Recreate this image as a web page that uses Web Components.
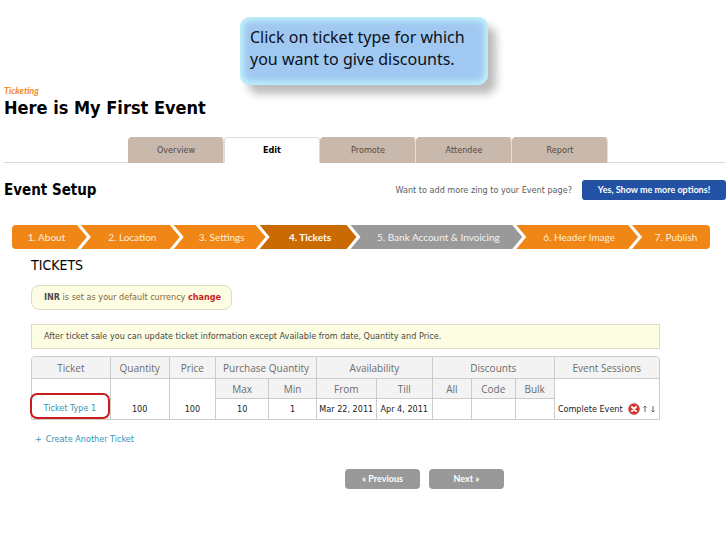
<!DOCTYPE html>
<html lang="en">
<head>
<meta charset="utf-8">
<meta name="viewport" content="width=device-width, initial-scale=1">
<title>Event Setup</title>
<style>
    body {
        margin: 0;
        background: #fff;
        color: #000;
        font-family: "DejaVu Sans Condensed", "Noto Sans", sans-serif;
        font-size: 9px;
        line-height: 14px;
    }
</style>
</head>
<body>
<event-page></event-page>

<script>
class CalloutNote extends HTMLElement {
    constructor() {
        super();
        this.attachShadow({ mode: 'open' });
        this.shadowRoot.innerHTML = `
            <style>
                :host {
                    display: block;
                    box-sizing: border-box;
                    max-width: 248px;
                    min-height: 68px;
                    margin: 0 auto;
                    padding: 9px 10px;
                    border-radius: 10px;
                    background: #a1c8f1;
                    box-shadow: inset 0 0 7px 3px #c4f8fb, 8px 9px 9px #bcbcbc;
                    color: #0a1220;
                    font: 16px/22px "Noto Sans", sans-serif;
                }
            </style>
            <slot></slot>
        `;
    }
}
customElements.define('callout-note', CalloutNote);

class TabItem extends HTMLElement {
    constructor() {
        super();
        this.attachShadow({ mode: 'open' });
        this.shadowRoot.innerHTML = `
            <style>
                :host {
                    display: block;
                    flex: 1;
                    margin-bottom: -1px;
                }
                a {
                    display: block;
                    box-sizing: border-box;
                    height: 26px;
                    border: 1px solid #c9b8ac;
                    border-right-color: #e6ddd6;
                    border-bottom: none;
                    border-radius: 4px 4px 0 0;
                    background: #c9b8ac;
                    color: #574b43;
                    line-height: 25px;
                    text-align: center;
                    text-decoration: none;
                }
                :host([active]) a {
                    border-color: #dcdcdc;
                    background: #fff;
                    color: #000;
                    font-weight: bold;
                }
            </style>
            <a href="#"><slot></slot></a>
        `;
    }
}
customElements.define('tab-item', TabItem);

class TabBar extends HTMLElement {
    constructor() {
        super();
        this.attachShadow({ mode: 'open' });
        this.shadowRoot.innerHTML = `
            <style>
                :host { display: block; }
                nav {
                    display: flex;
                    padding: 0 117px 0 124px;
                    border-bottom: 1px solid #d8d8d8;
                }
            </style>
            <nav><slot></slot></nav>
        `;
    }
}
customElements.define('tab-bar', TabBar);

class StepItem extends HTMLElement {
    constructor() {
        super();
        this.attachShadow({ mode: 'open' });
        this.shadowRoot.innerHTML = `
            <style>
                :host {
                    display: block;
                    flex: 1 1 0;
                    margin-left: -6px;
                }
                a {
                    display: block;
                    padding: 0 6px 0 10px;
                    background: #f08616;
                    clip-path: polygon(0 0, calc(100% - 10px) 0, 100% 50%, calc(100% - 10px) 100%, 0 100%, 10px 50%);
                    color: #fdeedd;
                    line-height: 24px;
                    text-align: center;
                    text-decoration: none;
                    white-space: nowrap;
                }
                :host(:first-child) { margin-left: 0; }
                :host(:first-child) a {
                    padding-left: 0;
                    border-radius: 4px 0 0 4px;
                    clip-path: polygon(0 0, calc(100% - 10px) 0, 100% 50%, calc(100% - 10px) 100%, 0 100%);
                }
                :host(:last-child) a {
                    padding-right: 0;
                    border-radius: 0 4px 4px 0;
                    clip-path: polygon(0 0, 100% 0, 100% 100%, 0 100%, 10px 50%);
                }
                :host([state="current"]) a {
                    background: #c96a02;
                    color: #fff;
                    font-weight: bold;
                }
                :host([state="pending"]) a {
                    background: #999;
                    color: #f4f4f4;
                }
            </style>
            <a href="#"><slot></slot></a>
        `;
    }

    connectedCallback() {
        this.style.flexGrow = this.getAttribute('size');
    }
}
customElements.define('step-item', StepItem);

class StepBar extends HTMLElement {
    constructor() {
        super();
        this.attachShadow({ mode: 'open' });
        this.shadowRoot.innerHTML = `
            <style>
                :host {
                    display: flex;
                    font-family: Lato, sans-serif;
                    font-size: 10px;
                }
            </style>
            <slot></slot>
        `;
    }
}
customElements.define('step-bar', StepBar);

class NoticeBox extends HTMLElement {
    constructor() {
        super();
        this.attachShadow({ mode: 'open' });
        this.shadowRoot.innerHTML = `
            <style>
                :host {
                    display: block;
                    padding: 0 12px;
                    border: 1px solid #dcdcc0;
                    background: #fdfde3;
                    color: #4a4a42;
                    line-height: 23px;
                }
                :host([pill]) {
                    width: fit-content;
                    border-radius: 8px;
                    color: #86683a;
                    padding-right: 10px;
                }
            </style>
            <slot></slot>
        `;
    }
}
customElements.define('notice-box', NoticeBox);

class TicketTable extends HTMLElement {
    constructor() {
        super();
        this.attachShadow({ mode: 'open' });
        this.shadowRoot.innerHTML = `
            <style>
                :host { display: block; }
                table {
                    width: 100%;
                    table-layout: fixed;
                    border: 1px solid #ccc;
                    border-radius: 4px 4px 0 0;
                    border-spacing: 0;
                }
                th, td {
                    height: 20px;
                    padding: 0;
                    border-left: 1px solid #ccc;
                    text-align: center;
                    white-space: nowrap;
                    line-height: 14px;
                    box-sizing: border-box;
                }
                th {
                    border-bottom: 1px solid #ccc;
                    background: #f3f3f3;
                    color: #6c6c6c;
                    font: 10px/14px "Open Sans", sans-serif;
                }
                thead tr:first-child th { height: 22px; }
                thead tr:first-child th:first-child { border-top-left-radius: 3px; }
                thead tr:first-child th:last-child { border-top-right-radius: 3px; }
                th:first-child, td:first-child { border-left: none; }
                td { color: #222; }
                .type {
                    display: block;
                    margin: -6px 0 0 -2px;
                    padding: 6px 0 2px;
                    border: 2px solid #cb1b1f;
                    border-radius: 7px;
                    color: #3596b5;
                    text-decoration: none;
                }
                .session {
                    display: flex;
                    align-items: center;
                    justify-content: center;
                    gap: 5px;
                }
                .tools {
                    display: flex;
                    align-items: center;
                    gap: 2px;
                }
                button {
                    display: block;
                    padding: 0;
                    border: none;
                    background: none;
                }
                svg { display: block; }
            </style>
            <table>
                <colgroup>
                    <col style="width: 12.4%">
                    <col style="width: 9.4%">
                    <col style="width: 7.4%">
                    <col style="width: 8.5%">
                    <col style="width: 7.6%">
                    <col style="width: 9.5%">
                    <col style="width: 9%">
                    <col style="width: 6.2%">
                    <col style="width: 7%">
                    <col style="width: 6.2%">
                    <col>
                </colgroup>
                <thead>
                    <tr>
                        <th>Ticket</th>
                        <th>Quantity</th>
                        <th>Price</th>
                        <th colspan="2">Purchase Quantity</th>
                        <th colspan="2">Availability</th>
                        <th colspan="3">Discounts</th>
                        <th>Event Sessions</th>
                    </tr>
                    <tr>
                        <td></td>
                        <td></td>
                        <td></td>
                        <th>Max</th>
                        <th>Min</th>
                        <th>From</th>
                        <th>Till</th>
                        <th>All</th>
                        <th>Code</th>
                        <th>Bulk</th>
                        <td></td>
                    </tr>
                </thead>
                <tbody></tbody>
            </table>
        `;
    }

    connectedCallback() {
        this.tickets = [
            { type: 'Ticket Type 1', cells: ['100', '100', '10', '1', 'Mar 22, 2011', 'Apr 4, 2011', '', '', ''], session: 'Complete Event' }
        ];
        this.render();
    }

    render() {
        this.shadowRoot.querySelector('tbody').innerHTML = this.tickets.map((ticket) => `
            <tr>
                <td><a class="type" href="#">${ticket.type}</a></td>
                ${ticket.cells.map((cell) => `<td>${cell}</td>`).join('')}
                <td>
                    <div class="session">
                        <span>${ticket.session}</span>
                        <div class="tools">
                            <button type="button" aria-label="Delete">
                                <svg width="12" height="12" viewBox="0 0 12 12">
                                    <circle cx="6" cy="6" r="5.5" fill="#d8302c" stroke="#b9625c" stroke-width=".6"/>
                                    <path d="M4 4l4 4M8 4l-4 4" stroke="#fff" stroke-width="2" stroke-linecap="round"/>
                                </svg>
                            </button>
                            <button type="button" aria-label="Move up">
                                <svg width="6" height="8" viewBox="0 0 6 8">
                                    <path d="M3 7V1M1.500 2.500L3 1l1.500 1.500" fill="none" stroke="#555" stroke-width=".9"/>
                                </svg>
                            </button>
                            <button type="button" aria-label="Move down">
                                <svg width="6" height="8" viewBox="0 0 6 8">
                                    <path d="M3 1V7M1.500 5.500L3 7l1.500-1.500" fill="none" stroke="#555" stroke-width=".9"/>
                                </svg>
                            </button>
                        </div>
                    </div>
                </td>
            </tr>
        `).join('');
    }
}
customElements.define('ticket-table', TicketTable);

class ActionButton extends HTMLElement {
    constructor() {
        super();
        this.attachShadow({ mode: 'open' });
        this.shadowRoot.innerHTML = `
            <style>
                :host { display: block; }
                button {
                    display: block;
                    min-width: 75px;
                    height: 20px;
                    padding: 0 14px;
                    border: none;
                    border-radius: 4px;
                    background: #999;
                    color: #fff;
                    font: bold 9px/20px Lato, sans-serif;
                }
                :host([primary]) button {
                    min-width: 144px;
                    border-radius: 3px;
                    background: #2352a5;
                }
            </style>
            <button type="button"><slot></slot></button>
        `;
    }
}
customElements.define('action-button', ActionButton);

class EventPage extends HTMLElement {
    constructor() {
        super();
        this.attachShadow({ mode: 'open' });
        this.shadowRoot.innerHTML = `
            <style>
                :host {
                    display: block;
                    padding-top: 17px;
                }
                h1, h2, h3, p { margin: 0; }
                header {
                    display: flex;
                    flex-direction: column;
                    padding: 0 3px 0 4px;
                }
                .brand {
                    color: #ef8a2a;
                    font: italic bold 9px/12px Lato, sans-serif;
                }
                h1 {
                    margin-bottom: 18px;
                    font-size: 18px;
                    line-height: 22px;
                }
                .setup {
                    display: flex;
                    align-items: center;
                    gap: 10px;
                    padding: 16px 2px 0 4px;
                }
                h2 {
                    flex: 1;
                    font-size: 15px;
                    line-height: 22px;
                }
                .setup p { color: #5c5c5c; }
                step-bar { margin: 24px 18px 0 12px; }
                main {
                    padding: 8px 68px 0 31px;
                }
                h3 {
                    margin-bottom: 11px;
                    font-size: 14px;
                    font-weight: normal;
                    line-height: 17px;
                }
                .code { color: #4c4c4c; }
                .change {
                    color: #cc1f1f;
                    font-weight: bold;
                    text-decoration: none;
                }
                .sale { margin: 14px 0 7px; }
                .create {
                    display: flex;
                    gap: 4px;
                    width: fit-content;
                    margin: 12px 0 0 4px;
                    color: #3596b5;
                    text-decoration: none;
                }
                footer {
                    display: flex;
                    gap: 9px;
                    padding: 23px 0 20px 345px;
                }
            </style>
            <callout-note>Click on ticket type for which you want to give discounts.</callout-note>
            <header>
                <span class="brand">Ticketing</span>
                <h1>Here is My First Event</h1>
                <tab-bar>
                    <tab-item>Overview</tab-item>
                    <tab-item active>Edit</tab-item>
                    <tab-item>Promote</tab-item>
                    <tab-item>Attendee</tab-item>
                    <tab-item>Report</tab-item>
                </tab-bar>
            </header>
            <section class="setup">
                <h2>Event Setup</h2>
                <p>Want to add more zing to your Event page?</p>
                <action-button primary>Yes, Show me more options!</action-button>
            </section>
            <step-bar>
                <step-item size="75">1. About</step-item>
                <step-item size="99">2. Location</step-item>
                <step-item size="92">3. Settings</step-item>
                <step-item size="97" state="current">4. Tickets</step-item>
                <step-item size="172" state="pending">5. Bank Account &amp; Invoicing</step-item>
                <step-item size="122">6. Header Image</step-item>
                <step-item size="78">7. Publish</step-item>
            </step-bar>
            <main>
                <h3>TICKETS</h3>
                <notice-box pill><b class="code">INR</b> is set as your default currency <a class="change" href="#">change</a></notice-box>
                <notice-box class="sale">After ticket sale you can update ticket information except Available from date, Quantity and Price.</notice-box>
                <ticket-table></ticket-table>
                <a class="create" href="#"><span>+</span><span>Create Another Ticket</span></a>
            </main>
            <footer>
                <action-button>« Previous</action-button>
                <action-button>Next »</action-button>
            </footer>
        `;
    }
}
customElements.define('event-page', EventPage);
</script>
</body>
</html>
